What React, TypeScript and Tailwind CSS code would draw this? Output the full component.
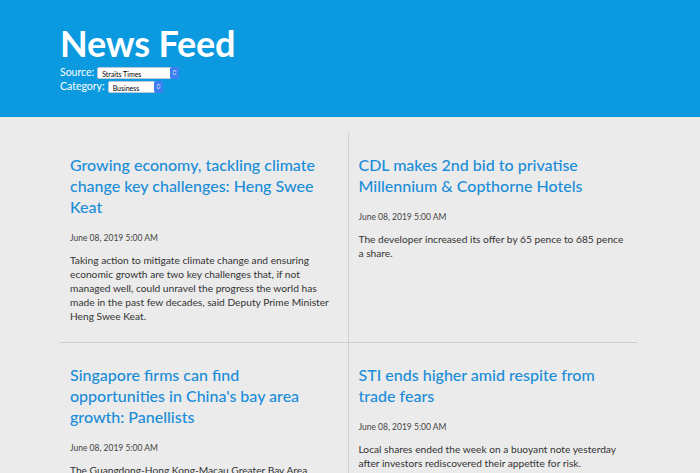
import { ChevronsUpDown } from "lucide-react";

interface Article {
  title: string;
  date: string;
  summary: string;
}

const articles: Article[] = [
  {
    title: "Growing economy, tackling climate change key challenges: Heng Swee Keat",
    date: "June 08, 2019 5:00 AM",
    summary:
      "Taking action to mitigate climate change and ensuring economic growth are two key challenges that, if not managed well, could unravel the progress the world has made in the past few decades, said Deputy Prime Minister Heng Swee Keat.",
  },
  {
    title: "CDL makes 2nd bid to privatise Millennium & Copthorne Hotels",
    date: "June 08, 2019 5:00 AM",
    summary: "The developer increased its offer by 65 pence to 685 pence a share.",
  },
  {
    title: "Singapore firms can find opportunities in China's bay area growth: Panellists",
    date: "June 08, 2019 5:00 AM",
    summary:
      "The Guangdong-Hong Kong-Macau Greater Bay Area presents a huge opportunity for Singapore companies looking to expand into China, said panellists at a forum.",
  },
  {
    title: "STI ends higher amid respite from trade fears",
    date: "June 08, 2019 5:00 AM",
    summary:
      "Local shares ended the week on a buoyant note yesterday after investors rediscovered their appetite for risk.",
  },
];

function Picker({ value, options, width }: { value: string; options: string[]; width: string }) {
  return (
    <div className={`relative ${width} h-[12px]`}>
      <select
        defaultValue={value}
        className="appearance-none w-full h-full bg-white text-black text-[7px] leading-[12px] pl-[4px] pr-[12px] rounded-[2px] border border-[#b9c7d6] outline-none"
      >
        {options.map((o) => (
          <option key={o}>{o}</option>
        ))}
      </select>
      <span className="absolute right-0 top-0 h-[12px] w-[9px] rounded-[2px] bg-[#3c7df0] flex items-center justify-center pointer-events-none">
        <ChevronsUpDown size={7} strokeWidth={3} color="#fff" />
      </span>
    </div>
  );
}

export default function App() {
  return (
    <div className="min-h-screen bg-[#ebebeb] font-['Lato',sans-serif] text-[#333]">
      <header className="bg-[#0b9ae0] h-[117px] px-[60px] pt-[22px] text-white">
        <h1 className="text-[36px] font-bold leading-[42px] tracking-[-0.2px]">News Feed</h1>
        <div className="flex items-center gap-[3px] text-[10.5px] leading-[13px] mt-[2px]">
          <span>Source:</span>
          <Picker value="Straits Times" options={["Straits Times", "Business Times"]} width="w-[82px]" />
        </div>
        <div className="flex items-center gap-[3px] text-[10.5px] leading-[13px] mt-[1px]">
          <span>Category:</span>
          <Picker value="Business" options={["Business", "World", "Tech"]} width="w-[55px]" />
        </div>
      </header>

      <main className="px-[60px] pt-[16px]">
        <div className="grid grid-cols-2 w-[577px]">
          {articles.map((a, i) => (
            <article
              key={a.title}
              className={`px-[10px] pt-[21px] pb-[19px] ${i % 2 === 0 ? "border-r border-[#cfcfcf]" : ""} ${
                i < 2 ? "border-b border-[#cfcfcf]" : ""
              }`}
            >
              <h2 className="text-[16px] leading-[21px] font-medium text-[#1a8dd9]">{a.title}</h2>
              <p className="text-[8.5px] leading-[12px] text-[#444] mt-[15px]">{a.date}</p>
              <p className="text-[10.2px] leading-[14px] text-[#333] mt-[9px]">{a.summary}</p>
            </article>
          ))}
        </div>
      </main>
    </div>
  );
}
